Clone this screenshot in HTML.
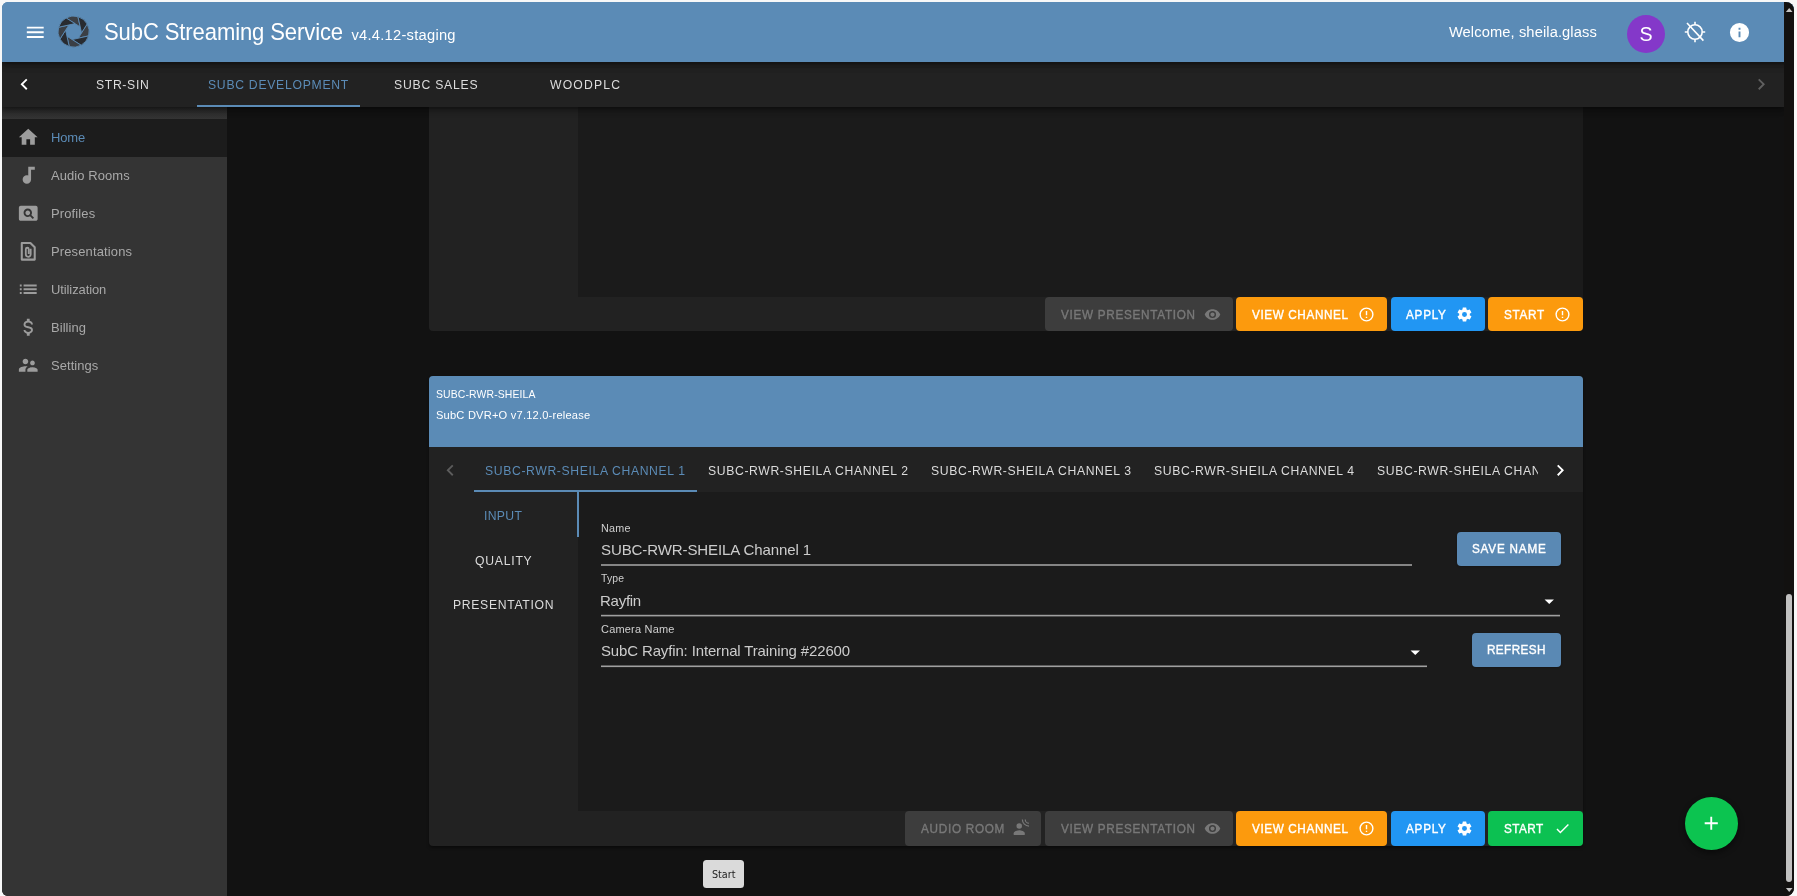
<!DOCTYPE html>
<html lang="en"><head><meta charset="utf-8"><title>SubC Streaming Service</title>
<style>
html,body{margin:0;padding:0;}
body{width:1797px;height:896px;overflow:hidden;background:#f8f8f8;font-family:"Liberation Sans",sans-serif;}
#win{position:absolute;left:2px;top:2px;width:1792px;height:894px;background:linear-gradient(#5b8bb6 0,#5b8bb6 60px,#121212 60px);border-radius:6px 8px 8px 6px;overflow:hidden;filter:blur(0.35px);}
.b{position:absolute;display:block;}
.t{position:absolute;line-height:20px;white-space:nowrap;}
</style></head><body>
<div id="win">
<div class="b" style="left:0.00px;top:105.00px;width:225.00px;height:789.00px;background:#343434;"></div>
<div class="b" style="left:0.00px;top:105.00px;width:225.00px;height:11.60px;background:linear-gradient(#282828,#343434);"></div>
<div class="b" style="left:0.00px;top:116.60px;width:225.00px;height:38.20px;background:#1c1c1c;"></div>
<svg class="b" style="left:14.95px;top:123.95px;" width="22.5" height="22.5" viewBox="0 0 24 24"><path fill="#9c9c9c" d="M10,20V14H14V20H19V12H22L12,3L2,12H5V20H10Z"/></svg>
<span class="t" id="nav0" style="left:48.70px;top:125.54px;font-size:13.45px;color:#5b8bb6;font-weight:400;letter-spacing:-0.146px;transform:scaleX(0.965);transform-origin:0 50%;">Home</span>
<svg class="b" style="left:14.95px;top:162.25px;" width="22.5" height="22.5" viewBox="0 0 24 24"><path fill="#9c9c9c" d="M12,3V12.26C11.5,12.09 11,12 10.5,12C8,12 6,14 6,16.5C6,19 8,21 10.5,21C13,21 15,19 15,16.5V6H19V3H12Z"/></svg>
<span class="t" id="nav1" style="left:48.70px;top:163.84px;font-size:13.45px;color:#a9a9a9;font-weight:400;letter-spacing:0.084px;transform:scaleX(0.965);transform-origin:0 50%;">Audio Rooms</span>
<svg class="b" style="left:14.95px;top:199.95px;" width="22.5" height="22.5" viewBox="0 0 24 24"><path fill="#9c9c9c" d="M11.5,9C10.12,9 9,10.12 9,11.5C9,12.88 10.12,14 11.5,14C12.88,14 14,12.88 14,11.5C14,10.12 12.88,9 11.5,9M20,4H4C2.9,4 2,4.9 2,6V18C2,19.1 2.9,20 4,20H20C21.1,20 22,19.1 22,18V6C22,4.9 21.1,4 20,4M16.79,18.21L13.88,15.3C13.19,15.74 12.37,16 11.5,16C9,16 7,14 7,11.5C7,9 9,7 11.5,7C14,7 16,9 16,11.5C16,12.38 15.74,13.19 15.3,13.89L18.21,16.79L16.79,18.21Z"/></svg>
<span class="t" id="nav2" style="left:48.70px;top:201.54px;font-size:13.45px;color:#a9a9a9;font-weight:400;letter-spacing:0.139px;transform:scaleX(0.965);transform-origin:0 50%;">Profiles</span>
<svg class="b" style="left:14.75px;top:238.45px" width="22.5" height="22.5" viewBox="0 0 24 24" fill="none" stroke="#9c9c9c" stroke-width="2.2" stroke-linejoin="round">
<path d="M5.1,3.1H14.3L18.9,7.7V20.9H5.1Z"/><path stroke-width="1.9" d="M14.6,9.3V15.3A2.6,2.6 0 0,1 9.4,15.3V9.8A1.55,1.55 0 0,1 12.5,9.8V14.9"/></svg>
<span class="t" id="nav3" style="left:48.70px;top:240.04px;font-size:13.45px;color:#a9a9a9;font-weight:400;letter-spacing:0.152px;transform:scaleX(0.965);transform-origin:0 50%;">Presentations</span>
<svg class="b" style="left:14.95px;top:276.25px;" width="22.5" height="22.5" viewBox="0 0 24 24"><path fill="#9c9c9c" d="M3,13H5V11H3V13M3,17H5V15H3V17M3,9H5V7H3V9M7,13H21V11H7V13M7,17H21V15H7V17M7,7V9H21V7H7Z"/></svg>
<span class="t" id="nav4" style="left:48.70px;top:277.84px;font-size:13.45px;color:#a9a9a9;font-weight:400;letter-spacing:-0.092px;transform:scaleX(0.965);transform-origin:0 50%;">Utilization</span>
<svg class="b" style="left:14.95px;top:314.45px;" width="22.5" height="22.5" viewBox="0 0 24 24"><path fill="#9c9c9c" d="M7,15H9C9,16.08 10.37,17 12,17C13.63,17 15,16.08 15,15C15,13.9 13.96,13.5 11.76,12.97C9.64,12.44 7,11.78 7,9C7,7.21 8.47,5.69 10.5,5.18V3H13.5V5.18C15.53,5.69 17,7.21 17,9H15C15,7.92 13.63,7 12,7C10.37,7 9,7.92 9,9C9,10.1 10.04,10.5 12.24,11.03C14.36,11.56 17,12.22 17,15C17,16.79 15.53,18.31 13.5,18.82V21H10.5V18.82C8.47,18.31 7,16.79 7,15Z"/></svg>
<span class="t" id="nav5" style="left:48.70px;top:316.04px;font-size:13.45px;color:#a9a9a9;font-weight:400;letter-spacing:0.072px;transform:scaleX(0.965);transform-origin:0 50%;">Billing</span>
<svg class="b" style="left:14.95px;top:352.15px;" width="22.5" height="22.5" viewBox="0 0 24 24"><path fill="#9c9c9c" d="M16.5,12C17.88,12 19,10.88 19,9.5C19,8.12 17.88,7 16.5,7C15.12,7 14,8.12 14,9.5C14,10.88 15.12,12 16.5,12M9,11C10.66,11 12,9.66 12,8C12,6.34 10.66,5 9,5C7.34,5 6,6.34 6,8C6,9.66 7.34,11 9,11M16.5,14C14.67,14 11,14.92 11,16.75V19H22V16.75C22,14.92 18.33,14 16.5,14M9,13C6.67,13 2,14.17 2,16.5V19H9V16.75C9,15.9 9.33,14.41 11.37,13.28C10.5,13.1 9.66,13 9,13Z"/></svg>
<span class="t" id="nav6" style="left:48.70px;top:353.74px;font-size:13.45px;color:#a9a9a9;font-weight:400;letter-spacing:0.074px;transform:scaleX(0.965);transform-origin:0 50%;">Settings</span>
<div class="b" style="left:426.50px;top:105.00px;width:1154.50px;height:224.00px;background:#222222;border-radius:0 0 4px 4px"></div>
<div class="b" style="left:576.40px;top:105.00px;width:1004.60px;height:189.80px;background:#1b1b1b;"></div>
<div class="b" style="left:1043.10px;top:295.20px;width:187.60px;height:34.00px;background:#3d3d3d;border-radius:4px"></div>
<span class="t" id="c1vp" style="left:1058.70px;top:302.98px;font-size:13.04px;color:#787878;font-weight:400;letter-spacing:0.786px;-webkit-text-stroke:0.4px #787878;transform:scaleX(0.9);transform-origin:0 50%;">VIEW PRESENTATION</span>
<svg class="b" style="left:1201.50px;top:303.70px;" width="17" height="17" viewBox="0 0 24 24"><path fill="#787878" d="M12,9A3,3 0 0,0 9,12A3,3 0 0,0 12,15A3,3 0 0,0 15,12A3,3 0 0,0 12,9M12,17A5,5 0 0,1 7,12A5,5 0 0,1 12,7A5,5 0 0,1 17,12A5,5 0 0,1 12,17M12,4.5C7,4.5 2.73,7.61 1,12C2.73,16.39 7,19.5 12,19.5C17,19.5 21.27,16.39 23,12C21.27,7.61 17,4.5 12,4.5Z"/></svg>
<div class="b" style="left:1234.10px;top:295.20px;width:150.80px;height:34.00px;background:#fc9a0d;border-radius:4px"></div>
<span class="t" id="c1vc" style="left:1249.60px;top:302.98px;font-size:13.04px;color:#fff;font-weight:400;letter-spacing:0.678px;-webkit-text-stroke:0.4px #fff;transform:scaleX(0.9);transform-origin:0 50%;">VIEW CHANNEL</span>
<svg class="b" style="left:1356.00px;top:303.70px;" width="17" height="17" viewBox="0 0 24 24"><path fill="#fff" d="M11,15H13V17H11V15M11,7H13V13H11V7M12,2C6.47,2 2,6.5 2,12A10,10 0 0,0 12,22A10,10 0 0,0 22,12A10,10 0 0,0 12,2M12,20A8,8 0 0,1 4,12A8,8 0 0,1 12,4A8,8 0 0,1 20,12A8,8 0 0,1 12,20Z"/></svg>
<div class="b" style="left:1389.10px;top:295.20px;width:93.50px;height:34.00px;background:#2196f3;border-radius:4px"></div>
<span class="t" id="c1ap" style="left:1404.30px;top:302.98px;font-size:13.04px;color:#fff;font-weight:400;letter-spacing:0.831px;-webkit-text-stroke:0.4px #fff;transform:scaleX(0.9);transform-origin:0 50%;">APPLY</span>
<svg class="b" style="left:1453.50px;top:303.70px;" width="17" height="17" viewBox="0 0 24 24"><path fill="#fff" d="M12,15.5A3.5,3.5 0 0,1 8.5,12A3.5,3.5 0 0,1 12,8.5A3.5,3.5 0 0,1 15.5,12A3.5,3.5 0 0,1 12,15.5M19.43,12.97C19.47,12.65 19.5,12.33 19.5,12C19.5,11.67 19.47,11.34 19.43,11L21.54,9.37C21.73,9.22 21.78,8.95 21.66,8.73L19.66,5.27C19.54,5.05 19.27,4.96 19.05,5.05L16.56,6.05C16.04,5.66 15.5,5.32 14.87,5.07L14.5,2.42C14.46,2.18 14.25,2 14,2H10C9.75,2 9.54,2.18 9.5,2.42L9.13,5.07C8.5,5.32 7.96,5.66 7.44,6.05L4.95,5.05C4.73,4.96 4.46,5.05 4.34,5.27L2.34,8.73C2.21,8.95 2.27,9.22 2.46,9.37L4.57,11C4.53,11.34 4.5,11.67 4.5,12C4.5,12.33 4.53,12.65 4.57,12.97L2.46,14.63C2.27,14.78 2.21,15.05 2.34,15.27L4.34,18.73C4.46,18.95 4.73,19.03 4.95,18.95L7.44,17.94C7.96,18.34 8.5,18.68 9.13,18.93L9.5,21.58C9.54,21.82 9.75,22 10,22H14C14.25,22 14.46,21.82 14.5,21.58L14.87,18.93C15.5,18.67 16.04,18.34 16.56,17.94L19.05,18.95C19.27,19.03 19.54,18.95 19.66,18.73L21.66,15.27C21.78,15.05 21.73,14.78 21.54,14.63L19.43,12.97Z"/></svg>
<div class="b" style="left:1486.30px;top:295.20px;width:94.80px;height:34.00px;background:#fc9a0d;border-radius:4px"></div>
<span class="t" id="c1st" style="left:1501.80px;top:302.98px;font-size:13.04px;color:#fff;font-weight:400;letter-spacing:0.797px;-webkit-text-stroke:0.4px #fff;transform:scaleX(0.9);transform-origin:0 50%;">START</span>
<svg class="b" style="left:1551.90px;top:303.70px;" width="17" height="17" viewBox="0 0 24 24"><path fill="#fff" d="M11,15H13V17H11V15M11,7H13V13H11V7M12,2C6.47,2 2,6.5 2,12A10,10 0 0,0 12,22A10,10 0 0,0 22,12A10,10 0 0,0 12,2M12,20A8,8 0 0,1 4,12A8,8 0 0,1 12,4A8,8 0 0,1 20,12A8,8 0 0,1 12,20Z"/></svg>
<div class="b" style="left:426.50px;top:374.20px;width:1154.50px;height:469.60px;background:#222222;border-radius:4px;box-shadow:0 2px 3px rgba(0,0,0,.4)"></div>
<div class="b" style="left:426.50px;top:374.20px;width:1154.50px;height:71.10px;background:#5b8bb6;border-radius:4px 4px 0 0"></div>
<span class="t" id="c2t1" style="left:434.40px;top:381.88px;font-size:11.59px;color:#fff;font-weight:400;letter-spacing:0.146px;transform:scaleX(0.9);transform-origin:0 50%;">SUBC-RWR-SHEILA</span>
<span class="t" id="c2t2" style="left:434.40px;top:402.88px;font-size:11.59px;color:#fff;font-weight:400;letter-spacing:0.205px;transform:scaleX(0.96);transform-origin:0 50%;">SubC DVR+O v7.12.0-release</span>
<div class="b" style="left:426.50px;top:445.30px;width:1154.50px;height:44.40px;background:#222222;"></div>
<svg class="b" style="left:437.45px;top:456.75px;" width="22.5" height="22.5" viewBox="0 0 24 24"><path fill="#5c5c5c" d="M15.41,16.58L10.83,12L15.41,7.41L14,6L8,12L14,18L15.41,16.58Z"/></svg>
<div class="b" style="left:460px;top:445.3px;width:1076.4px;height:44.4px;overflow:hidden">
<span class="t" id="ch1" style="left:22.80px;top:13.70px;font-size:13.56px;color:#5b8bb6;font-weight:400;letter-spacing:0.698px;white-space:nowrap;transform:scaleX(0.9);transform-origin:0 50%;">SUBC-RWR-SHEILA CHANNEL 1</span>
<span class="t" id="ch2" style="left:245.80px;top:13.70px;font-size:13.56px;color:#dcdcdc;font-weight:400;letter-spacing:0.698px;white-space:nowrap;transform:scaleX(0.9);transform-origin:0 50%;">SUBC-RWR-SHEILA CHANNEL 2</span>
<span class="t" id="ch3" style="left:468.80px;top:13.70px;font-size:13.56px;color:#dcdcdc;font-weight:400;letter-spacing:0.698px;white-space:nowrap;transform:scaleX(0.9);transform-origin:0 50%;">SUBC-RWR-SHEILA CHANNEL 3</span>
<span class="t" id="ch4" style="left:692.00px;top:13.70px;font-size:13.56px;color:#dcdcdc;font-weight:400;letter-spacing:0.698px;white-space:nowrap;transform:scaleX(0.9);transform-origin:0 50%;">SUBC-RWR-SHEILA CHANNEL 4</span>
<span class="t" id="ch5" style="left:915.10px;top:13.70px;font-size:13.56px;color:#dcdcdc;font-weight:400;letter-spacing:0.698px;white-space:nowrap;transform:scaleX(0.9);transform-origin:0 50%;">SUBC-RWR-SHEILA CHANNEL 5</span>
</div>
<div class="b" style="left:471.70px;top:488.20px;width:223.10px;height:2.30px;background:#5b8bb6;"></div>
<svg class="b" style="left:1547.25px;top:456.75px;" width="22.5" height="22.5" viewBox="0 0 24 24"><path fill="#fff" d="M8.59,16.58L13.17,12L8.59,7.41L10,6L16,12L10,18L8.59,16.58Z"/></svg>
<div class="b" style="left:576.40px;top:489.70px;width:1004.60px;height:319.20px;background:#1b1b1b;"></div>
<div class="b" style="left:575.00px;top:489.90px;width:2.10px;height:45.20px;background:#5b8bb6;"></div>
<span class="t" id="vt1" style="left:482.08px;top:503.50px;font-size:13.56px;color:#5b8bb6;font-weight:400;letter-spacing:0.349px;transform:scaleX(0.9);transform-origin:0 50%;">INPUT</span>
<span class="t" id="vt2" style="left:473.30px;top:548.60px;font-size:13.56px;color:#dcdcdc;font-weight:400;letter-spacing:0.847px;transform:scaleX(0.9);transform-origin:0 50%;">QUALITY</span>
<span class="t" id="vt3" style="left:451.00px;top:593.40px;font-size:13.56px;color:#dcdcdc;font-weight:400;letter-spacing:0.748px;transform:scaleX(0.9);transform-origin:0 50%;">PRESENTATION</span>
<span class="t" id="l1" style="left:599.30px;top:516.38px;font-size:11.59px;color:#cfcfcf;font-weight:400;letter-spacing:0.282px;transform:scaleX(0.93);transform-origin:0 50%;">Name</span>
<span class="t" id="v1" style="left:599.30px;top:538.12px;font-size:15.52px;color:#cccccc;font-weight:400;letter-spacing:-0.125px;transform:scaleX(0.97);transform-origin:0 50%;">SUBC-RWR-SHEILA Channel 1</span>
<div class="b" style="left:598.90px;top:562.00px;width:810.90px;height:2.00px;background:linear-gradient(to bottom,rgb(133,133,133) 0.000% 50.000%,rgb(133,133,133) 50.000% 100.000%);"></div>
<span class="t" id="l2" style="left:599.30px;top:566.08px;font-size:11.59px;color:#cfcfcf;font-weight:400;letter-spacing:0.189px;transform:scaleX(0.9);transform-origin:0 50%;">Type</span>
<span class="t" id="v2" style="left:598.46px;top:588.82px;font-size:15.52px;color:#cccccc;font-weight:400;letter-spacing:-0.302px;transform:scaleX(0.97);transform-origin:0 50%;">Rayfin</span>
<div class="b" style="left:598.90px;top:612.00px;width:959.60px;height:3.00px;background:linear-gradient(to bottom,rgb(54,54,54) 0.000% 33.333%,rgb(160,160,160) 33.333% 66.667%,rgb(80,80,80) 66.667% 100.000%);"></div>
<svg class="b" style="left:1536.25px;top:588.05px;" width="22.5" height="22.5" viewBox="0 0 24 24"><path fill="#fff" d="M7,10L12,15L17,10H7Z"/></svg>
<span class="t" id="l3" style="left:599.30px;top:617.38px;font-size:11.59px;color:#cfcfcf;font-weight:400;letter-spacing:0.200px;transform:scaleX(0.95);transform-origin:0 50%;">Camera Name</span>
<span class="t" id="v3" style="left:599.30px;top:639.12px;font-size:15.52px;color:#cccccc;font-weight:400;letter-spacing:-0.137px;transform:scaleX(0.965);transform-origin:0 50%;">SubC Rayfin: Internal Training #22600</span>
<div class="b" style="left:598.90px;top:663.00px;width:825.70px;height:3.00px;background:linear-gradient(to bottom,rgb(94,94,94) 0.000% 33.333%,rgb(160,160,160) 33.333% 66.667%,rgb(40,40,40) 66.667% 100.000%);"></div>
<svg class="b" style="left:1401.85px;top:638.75px;" width="22.5" height="22.5" viewBox="0 0 24 24"><path fill="#fff" d="M7,10L12,15L17,10H7Z"/></svg>
<div class="b" style="left:1454.60px;top:530.00px;width:104.00px;height:33.50px;background:#5a89b4;border-radius:4px;box-shadow:0 1px 2px rgba(0,0,0,.25)"></div>
<span class="t" id="bsave" style="left:1469.80px;top:537.38px;font-size:13.04px;color:#fff;font-weight:400;letter-spacing:0.870px;-webkit-text-stroke:0.4px #fff;transform:scaleX(0.9);transform-origin:0 50%;">SAVE NAME</span>
<div class="b" style="left:1469.60px;top:630.90px;width:89.00px;height:33.70px;background:#5a89b4;border-radius:4px;box-shadow:0 1px 2px rgba(0,0,0,.25)"></div>
<span class="t" id="bref" style="left:1484.80px;top:638.18px;font-size:13.04px;color:#fff;font-weight:400;letter-spacing:0.441px;-webkit-text-stroke:0.4px #fff;transform:scaleX(0.9);transform-origin:0 50%;">REFRESH</span>
<div class="b" style="left:903.40px;top:809.00px;width:135.90px;height:34.80px;background:#3d3d3d;border-radius:4px"></div>
<span class="t" id="c2ar" style="left:918.50px;top:816.78px;font-size:13.04px;color:#787878;font-weight:400;letter-spacing:0.795px;-webkit-text-stroke:0.4px #787878;transform:scaleX(0.9);transform-origin:0 50%;">AUDIO ROOM</span>
<svg class="b" style="left:1010.80px;top:817.90px;overflow:visible" width="17" height="17" viewBox="0 0 24 24"><circle cx="8.8" cy="8.6" r="3.9" fill="#787878"/><path fill="#787878" d="M1,21V18.6C1,15.8 6.2,14.4 8.8,14.4C11.4,14.4 16.6,15.8 16.6,18.6V21Z"/><path fill="none" stroke="#787878" stroke-width="1.7" d="M13.2,-0.8A9.6,9.6 0 0,0 22.6,8.7M17.3,-0.8A5.4,5.4 0 0,0 22.6,4.6"/></svg>
<div class="b" style="left:1043.10px;top:809.00px;width:187.60px;height:34.80px;background:#3d3d3d;border-radius:4px"></div>
<span class="t" id="c2vp" style="left:1058.70px;top:816.78px;font-size:13.04px;color:#787878;font-weight:400;letter-spacing:0.786px;-webkit-text-stroke:0.4px #787878;transform:scaleX(0.9);transform-origin:0 50%;">VIEW PRESENTATION</span>
<svg class="b" style="left:1201.50px;top:817.90px;" width="17" height="17" viewBox="0 0 24 24"><path fill="#787878" d="M12,9A3,3 0 0,0 9,12A3,3 0 0,0 12,15A3,3 0 0,0 15,12A3,3 0 0,0 12,9M12,17A5,5 0 0,1 7,12A5,5 0 0,1 12,7A5,5 0 0,1 17,12A5,5 0 0,1 12,17M12,4.5C7,4.5 2.73,7.61 1,12C2.73,16.39 7,19.5 12,19.5C17,19.5 21.27,16.39 23,12C21.27,7.61 17,4.5 12,4.5Z"/></svg>
<div class="b" style="left:1234.10px;top:809.00px;width:150.80px;height:34.80px;background:#fc9a0d;border-radius:4px"></div>
<span class="t" id="c2vc" style="left:1249.60px;top:816.78px;font-size:13.04px;color:#fff;font-weight:400;letter-spacing:0.678px;-webkit-text-stroke:0.4px #fff;transform:scaleX(0.9);transform-origin:0 50%;">VIEW CHANNEL</span>
<svg class="b" style="left:1356.00px;top:817.90px;" width="17" height="17" viewBox="0 0 24 24"><path fill="#fff" d="M11,15H13V17H11V15M11,7H13V13H11V7M12,2C6.47,2 2,6.5 2,12A10,10 0 0,0 12,22A10,10 0 0,0 22,12A10,10 0 0,0 12,2M12,20A8,8 0 0,1 4,12A8,8 0 0,1 12,4A8,8 0 0,1 20,12A8,8 0 0,1 12,20Z"/></svg>
<div class="b" style="left:1389.10px;top:809.00px;width:93.50px;height:34.80px;background:#2196f3;border-radius:4px"></div>
<span class="t" id="c2ap" style="left:1404.30px;top:816.78px;font-size:13.04px;color:#fff;font-weight:400;letter-spacing:0.831px;-webkit-text-stroke:0.4px #fff;transform:scaleX(0.9);transform-origin:0 50%;">APPLY</span>
<svg class="b" style="left:1453.50px;top:817.90px;" width="17" height="17" viewBox="0 0 24 24"><path fill="#fff" d="M12,15.5A3.5,3.5 0 0,1 8.5,12A3.5,3.5 0 0,1 12,8.5A3.5,3.5 0 0,1 15.5,12A3.5,3.5 0 0,1 12,15.5M19.43,12.97C19.47,12.65 19.5,12.33 19.5,12C19.5,11.67 19.47,11.34 19.43,11L21.54,9.37C21.73,9.22 21.78,8.95 21.66,8.73L19.66,5.27C19.54,5.05 19.27,4.96 19.05,5.05L16.56,6.05C16.04,5.66 15.5,5.32 14.87,5.07L14.5,2.42C14.46,2.18 14.25,2 14,2H10C9.75,2 9.54,2.18 9.5,2.42L9.13,5.07C8.5,5.32 7.96,5.66 7.44,6.05L4.95,5.05C4.73,4.96 4.46,5.05 4.34,5.27L2.34,8.73C2.21,8.95 2.27,9.22 2.46,9.37L4.57,11C4.53,11.34 4.5,11.67 4.5,12C4.5,12.33 4.53,12.65 4.57,12.97L2.46,14.63C2.27,14.78 2.21,15.05 2.34,15.27L4.34,18.73C4.46,18.95 4.73,19.03 4.95,18.95L7.44,17.94C7.96,18.34 8.5,18.68 9.13,18.93L9.5,21.58C9.54,21.82 9.75,22 10,22H14C14.25,22 14.46,21.82 14.5,21.58L14.87,18.93C15.5,18.67 16.04,18.34 16.56,17.94L19.05,18.95C19.27,19.03 19.54,18.95 19.66,18.73L21.66,15.27C21.78,15.05 21.73,14.78 21.54,14.63L19.43,12.97Z"/></svg>
<div class="b" style="left:1486.30px;top:809.00px;width:94.80px;height:34.80px;background:#0cc152;border-radius:4px"></div>
<span class="t" id="c2st" style="left:1502.00px;top:816.78px;font-size:13.04px;color:#fff;font-weight:400;letter-spacing:0.497px;-webkit-text-stroke:0.4px #fff;transform:scaleX(0.9);transform-origin:0 50%;">START</span>
<svg class="b" style="left:1552.00px;top:817.90px;" width="17" height="17" viewBox="0 0 24 24"><path fill="#fff" d="M21,7L9,19L3.5,13.5L4.91,12.09L9,16.17L19.59,5.59L21,7Z"/></svg>
<div class="b" style="left:700.90px;top:857.70px;width:41.40px;height:28.30px;background:#dadada;border-radius:3.5px"></div>
<span class="t" id="tip" style="left:709.80px;top:863.07px;font-size:10.76px;color:#1d1d1d;font-weight:400;letter-spacing:-0.040px;font-family:'DejaVu Sans','Liberation Sans',sans-serif;transform:scaleX(0.9);transform-origin:0 50%;">Start</span>
<div class="b" style="left:1683.10px;top:794.90px;width:52.80px;height:52.80px;background:#0cc450;border-radius:50%;box-shadow:0 3px 6px rgba(0,0,0,.45)"></div>
<svg class="b" style="left:1698.25px;top:810.05px;" width="22.5" height="22.5" viewBox="0 0 24 24"><path fill="#fff" d="M19,13H13V19H11V13H5V11H11V5H13V11H19V13Z"/></svg>
<div id="tabsbar">
<div class="b" style="left:0.00px;top:60.00px;width:1782.00px;height:45.00px;background:#222222;box-shadow:0 2px 4px -1px rgba(0,0,0,.3),0 4px 5px rgba(0,0,0,.2),0 1px 10px rgba(0,0,0,.14)"></div>
<svg class="b" style="left:10.95px;top:70.75px;" width="22.5" height="22.5" viewBox="0 0 24 24"><path fill="#fff" d="M15.41,16.58L10.83,12L15.41,7.41L14,6L8,12L14,18L15.41,16.58Z"/></svg>
<span class="t" id="tab1" style="left:94.20px;top:73.20px;font-size:13.56px;color:#dcdcdc;font-weight:400;letter-spacing:0.734px;transform:scaleX(0.9);transform-origin:0 50%;">STR-SIN</span>
<span class="t" id="tab2" style="left:206.20px;top:73.20px;font-size:13.56px;color:#5b8bb6;font-weight:400;letter-spacing:0.803px;transform:scaleX(0.9);transform-origin:0 50%;">SUBC DEVELOPMENT</span>
<span class="t" id="tab3" style="left:392.10px;top:73.20px;font-size:13.56px;color:#dcdcdc;font-weight:400;letter-spacing:0.873px;transform:scaleX(0.9);transform-origin:0 50%;">SUBC SALES</span>
<span class="t" id="tab4" style="left:547.80px;top:73.20px;font-size:13.56px;color:#dcdcdc;font-weight:400;letter-spacing:1.304px;transform:scaleX(0.9);transform-origin:0 50%;">WOODPLC</span>
<div class="b" style="left:195.20px;top:102.60px;width:162.80px;height:2.40px;background:#5b8bb6;"></div>
<svg class="b" style="left:1748.25px;top:70.75px;" width="22.5" height="22.5" viewBox="0 0 24 24"><path fill="#5f5f5f" d="M8.59,16.58L13.17,12L8.59,7.41L10,6L16,12L10,18L8.59,16.58Z"/></svg>
</div>
<div id="hdr">
<div class="b" style="left:0.00px;top:0.00px;width:1792.00px;height:60.00px;background:#5b8bb6;box-shadow:0 2px 4px -1px rgba(0,0,0,.3),0 4px 6px rgba(0,0,0,.22),0 1px 10px rgba(0,0,0,.16)"></div>
<svg class="b" style="left:22.35px;top:19.05px;" width="22.5" height="22.5" viewBox="0 0 24 24"><path fill="#fff" d="M3,6H21V8H3V6M3,11H21V13H3V11M3,16H21V18H3V16Z"/></svg>
<svg class="b" style="left:55.10px;top:13.40px" width="33.2" height="33.2" viewBox="-16.6 -16.6 33.2 33.2"><path d="M-7.52,-13.67L6.64,-4.65L4.34,-14.98A15.6,15.6 0 0,0 -7.52,-13.67Z" fill="#3b3f45" stroke="#5b8bb6" stroke-width="0.9" stroke-linejoin="miter"/><path d="M4.34,-14.98L7.98,1.41L13.67,-7.52A15.6,15.6 0 0,0 4.34,-14.98Z" fill="#282b30" stroke="#5b8bb6" stroke-width="0.9" stroke-linejoin="miter"/><path d="M13.67,-7.52L4.65,6.64L14.98,4.34A15.6,15.6 0 0,0 13.67,-7.52Z" fill="#3b3f45" stroke="#5b8bb6" stroke-width="0.9" stroke-linejoin="miter"/><path d="M14.98,4.34L-1.41,7.98L7.52,13.67A15.6,15.6 0 0,0 14.98,4.34Z" fill="#282b30" stroke="#5b8bb6" stroke-width="0.9" stroke-linejoin="miter"/><path d="M7.52,13.67L-6.64,4.65L-4.34,14.98A15.6,15.6 0 0,0 7.52,13.67Z" fill="#3b3f45" stroke="#5b8bb6" stroke-width="0.9" stroke-linejoin="miter"/><path d="M-4.34,14.98L-7.98,-1.41L-13.67,7.52A15.6,15.6 0 0,0 -4.34,14.98Z" fill="#282b30" stroke="#5b8bb6" stroke-width="0.9" stroke-linejoin="miter"/><path d="M-13.67,7.52L-4.65,-6.64L-14.98,-4.34A15.6,15.6 0 0,0 -13.67,7.52Z" fill="#3b3f45" stroke="#5b8bb6" stroke-width="0.9" stroke-linejoin="miter"/><path d="M-14.98,-4.34L1.41,-7.98L-7.52,-13.67A15.6,15.6 0 0,0 -14.98,-4.34Z" fill="#282b30" stroke="#5b8bb6" stroke-width="0.9" stroke-linejoin="miter"/></svg>
<span class="t" id="title" style="left:102.08px;top:20.00px;font-size:23.08px;color:#fff;font-weight:400;letter-spacing:-0.109px;transform:scaleX(0.955);transform-origin:0 50%;">SubC Streaming Service</span>
<span class="t" id="ver" style="left:349.50px;top:22.91px;font-size:14.7px;color:#fff;font-weight:400;letter-spacing:0.254px;">v4.4.12-staging</span>
<span class="t" id="welcome" style="left:1446.90px;top:20.31px;font-size:14.7px;color:#fff;font-weight:400;letter-spacing:0.102px;">Welcome, sheila.glass</span>
<div class="b" style="left:1624.70px;top:13.20px;width:38.00px;height:38.00px;background:#8438c9;border-radius:50%"></div>
<span class="t" id="avS" style="left:1637.50px;top:21.59px;font-size:19.66px;color:#fff;font-weight:400;letter-spacing:0.000px;">S</span>
<svg class="b" style="left:1680.5px;top:18.4px" width="24" height="24" viewBox="-12 -12 24 24" fill="none" stroke="#fff" stroke-width="1.6">
<circle cx="0" cy="0" r="7.2"/><path d="M0,-7.5V-10.2M0,7.5V10.2M-7.5,0H-10.2M7.5,0H10.2M-8.0,-9.0L8.4,8.6"/></svg>
<svg class="b" style="left:1725.80px;top:18.50px;" width="23" height="23" viewBox="0 0 24 24"><path fill="#fff" d="M13,9H11V7H13M13,17H11V11H13M12,2A10,10 0 0,0 2,12A10,10 0 0,0 12,22A10,10 0 0,0 22,12A10,10 0 0,0 12,2Z"/></svg>
</div>
<div class="b" style="left:1782.40px;top:0.00px;width:10.00px;height:894.00px;background:#121110;"></div>
<div class="b" style="left:1784.20px;top:592.00px;width:5.80px;height:288.00px;background:#c1c1c1;border-radius:3px"></div>
<svg class="b" style="left:1782px;top:4px" width="10" height="8" viewBox="0 0 10 8"><path d="M1.9,6.1L5.2,2.0L8.5,6.1Z" fill="#c4c4c4"/></svg>
<svg class="b" style="left:1782px;top:883.5px" width="10" height="8" viewBox="0 0 10 8"><path d="M1.9,1.9L5.2,6.0L8.5,1.9Z" fill="#c4c4c4"/></svg>
</div>
</body></html>
